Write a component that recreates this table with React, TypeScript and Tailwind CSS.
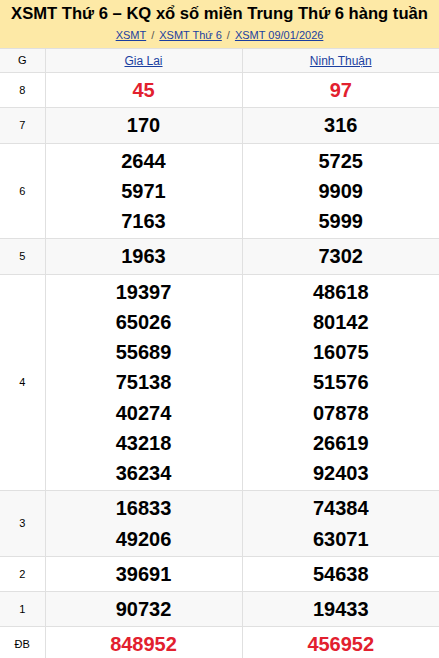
const rows: { g: string; a: string[]; b: string[]; red?: boolean }[] = [
  { g: "8", a: ["45"], b: ["97"], red: true },
  { g: "7", a: ["170"], b: ["316"] },
  { g: "6", a: ["2644", "5971", "7163"], b: ["5725", "9909", "5999"] },
  { g: "5", a: ["1963"], b: ["7302"] },
  {
    g: "4",
    a: ["19397", "65026", "55689", "75138", "40274", "43218", "36234"],
    b: ["48618", "80142", "16075", "51576", "07878", "26619", "92403"],
  },
  { g: "3", a: ["16833", "49206"], b: ["74384", "63071"] },
  { g: "2", a: ["39691"], b: ["54638"] },
  { g: "1", a: ["90732"], b: ["19433"] },
  { g: "ĐB", a: ["848952"], b: ["456952"], red: true },
];

const App = () => {
  return (
    <div className="w-[439px] font-['Liberation_Sans',Arial,sans-serif] bg-white">
      <div className="bg-[#fde9a6] text-center pt-[3px] h-[48px]">
        <h1 className="text-[16.6px] font-bold leading-[22px] text-black whitespace-nowrap">
          XSMT Thứ 6 – KQ xổ số miền Trung Thứ 6 hàng tuần
        </h1>
        <div className="text-[11px] leading-[18px] text-[#555] mt-[1px] whitespace-nowrap">
          <a className="underline text-[#1b3fa0]">XSMT</a>
          <span className="mx-[5px]">/</span>
          <a className="underline text-[#1b3fa0]">XSMT Thứ 6</a>
          <span className="mx-[5px]">/</span>
          <a className="underline text-[#1b3fa0]">XSMT 09/01/2026</a>
        </div>
      </div>
      <table className="w-full table-fixed border-collapse">
        <thead>
          <tr className="bg-[#f8f8f8] h-[24px]">
            <th className="w-[45px] border border-[#e0e0e0] border-l-0 text-[11px] font-normal text-black">
              G
            </th>
            <th className="border border-[#e0e0e0] text-[12px] font-normal">
              <a className="underline text-[#1b3fa0]">Gia Lai</a>
            </th>
            <th className="border border-[#e0e0e0] border-r-0 text-[12px] font-normal">
              <a className="underline text-[#1b3fa0]">Ninh Thuận</a>
            </th>
          </tr>
        </thead>
        <tbody>
          {rows.map((r, i) => (
            <tr key={r.g} className={i % 2 === 0 ? "bg-white" : "bg-[#f8f8f8]"}>
              <td className="border border-[#e0e0e0] border-l-0 text-center text-[11px] text-black">
                {r.g}
              </td>
              <td className="border border-[#e0e0e0] text-center py-[2px]">
                {r.a.map((n) => (
                  <div
                    key={n}
                    className={
                      r.red
                        ? "text-[20px] leading-[30.25px] font-bold text-[#e2202e]"
                        : "text-[20px] leading-[30.25px] font-bold text-black"
                    }
                  >
                    {n}
                  </div>
                ))}
              </td>
              <td className="border border-[#e0e0e0] border-r-0 text-center py-[2px]">
                {r.b.map((n) => (
                  <div
                    key={n}
                    className={
                      r.red
                        ? "text-[20px] leading-[30.25px] font-bold text-[#e2202e]"
                        : "text-[20px] leading-[30.25px] font-bold text-black"
                    }
                  >
                    {n}
                  </div>
                ))}
              </td>
            </tr>
          ))}
        </tbody>
      </table>
    </div>
  );
};

export default App;
